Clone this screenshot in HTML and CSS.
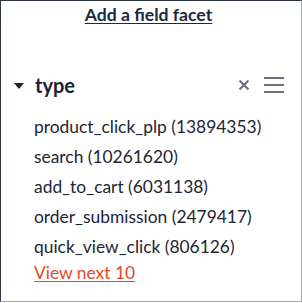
FILE: index.html
```html
<!DOCTYPE html>
<html>
<head>
<meta charset="utf-8">
<link rel="stylesheet" href="styles.css">
</head>
<body>
<div class="panel">
  <div class="title-row"><a class="title" href="#">Add a field facet</a></div>
  <div class="facet">
    <div class="facet-head">
      <span class="caret"></span>
      <span class="facet-name">type</span>
      <span class="spacer"></span>
      <svg class="icon-x" width="12" height="12" viewBox="0 0 12 12"><path d="M1.5 1.5 L10.5 10.5 M10.5 1.5 L1.5 10.5" stroke="#6b7180" stroke-width="2.2" stroke-linecap="butt"/></svg>
      <svg class="icon-menu" width="20" height="16" viewBox="0 0 20 16"><path d="M0 1 H20 M0 8 H20 M0 15 H20" stroke="#6b7180" stroke-width="2"/></svg>
    </div>
    <ul class="values">
      <li>product_click_plp (13894353)</li>
      <li>search (10261620)</li>
      <li>add_to_cart (6031138)</li>
      <li>order_submission (2479417)</li>
      <li>quick_view_click (806126)</li>
    </ul>
    <a class="more" href="#">View next 10</a>
  </div>
</div>
</body>
</html>
```
FILE: styles.css
```css
html, body {
  margin: 0;
  padding: 0;
  background: #ffffff;
}
body {
  font-family: Lato, "Open Sans", sans-serif;
  color: #1d2536;
}
.panel {
  box-sizing: border-box;
  width: 302px;
  height: 302px;
  border-top: 1px solid #2f3744;
  border-left: 1px solid #2f3744;
  border-right: 1px solid #a7abb2;
  border-bottom: 1px solid #a7abb2;
  display: flex;
  flex-direction: column;
}
.title-row {
  display: flex;
  justify-content: center;
  padding-top: 3px;
  padding-right: 5px;
}
.title {
  font-size: 17.6px;
  line-height: 22px;
  font-weight: 700;
  color: #1b2841;
  text-decoration: underline;
  text-underline-offset: 2px;
  text-decoration-thickness: 1px;
}
.facet {
  padding-top: 47px;
  display: flex;
  flex-direction: column;
}
.facet-head {
  display: flex;
  align-items: center;
  height: 24px;
  padding-left: 13px;
  padding-right: 17px;
}
.caret {
  width: 0;
  height: 0;
  border-left: 5px solid transparent;
  border-right: 5px solid transparent;
  border-top: 6px solid #1d2536;
  margin-right: 11px;
  margin-top: 1px;
}
.facet-name {
  font-size: 20px;
  line-height: 24px;
  font-weight: 700;
  color: #1b2233;
}
.spacer {
  flex: 1;
}
.icon-x {
  display: block;
  margin-right: 14px;
}
.icon-menu {
  display: block;
}
.values {
  list-style: none;
  margin: 15px 0 0 0;
  padding: 0 0 0 33px;
}
.values li {
  font-size: 17.4px;
  line-height: 30px;
  color: #1d2536;
}
.more {
  margin-left: 33px;
  font-size: 17.4px;
  line-height: 22px;
  color: #e9461f;
  text-decoration: underline;
  text-underline-offset: 2px;
  align-self: flex-start;
}
```
